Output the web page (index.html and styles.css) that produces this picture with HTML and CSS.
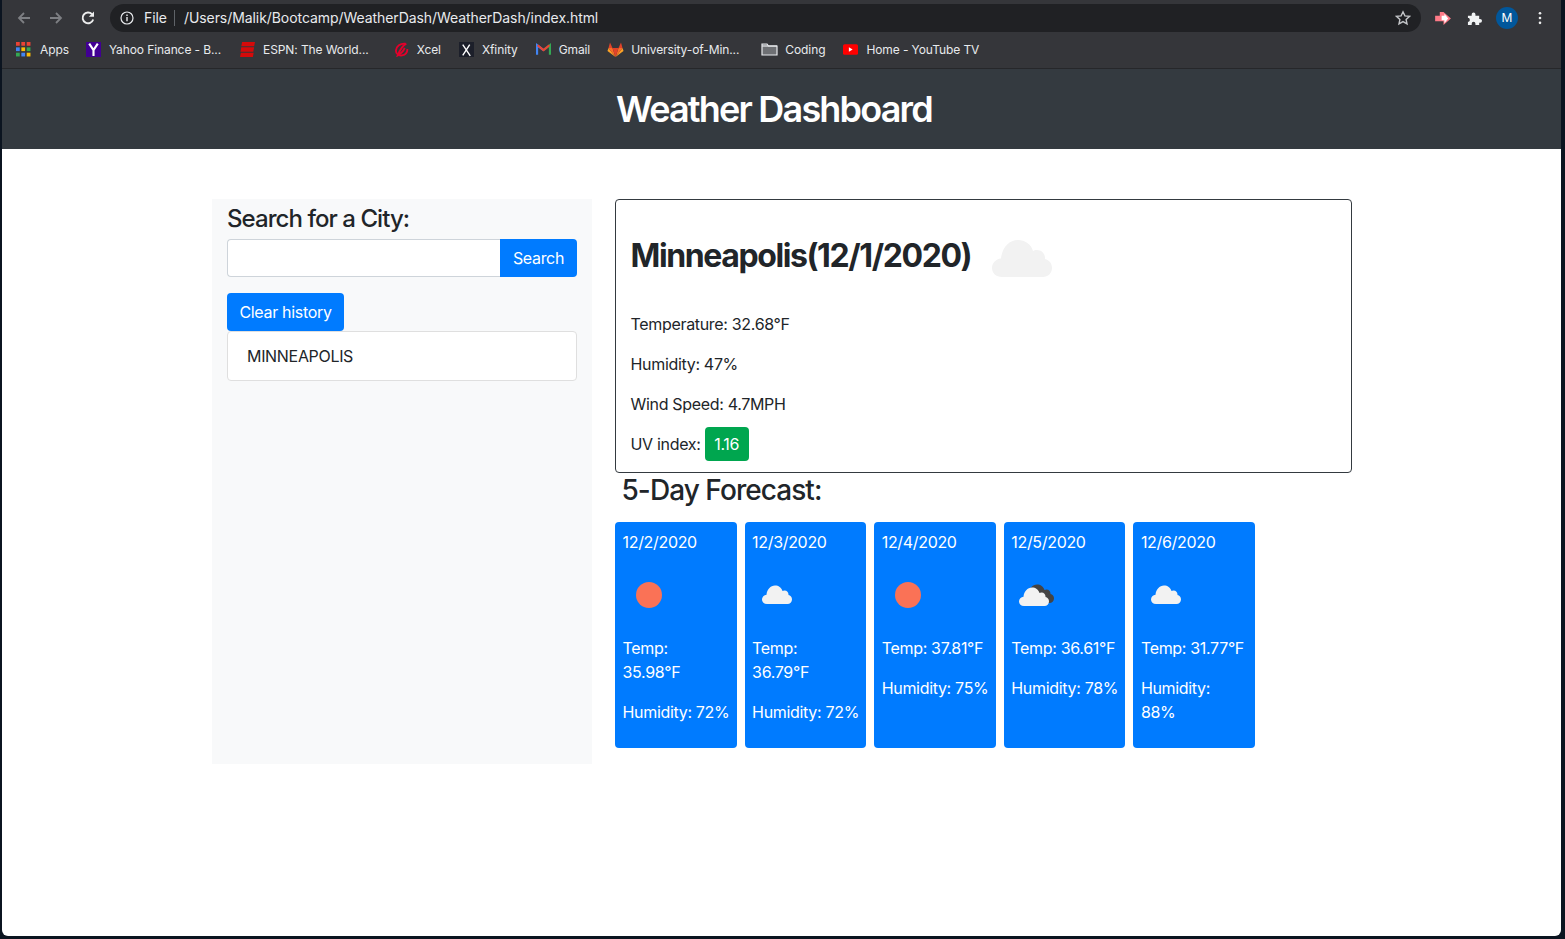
FILE: index.html

```html
<!DOCTYPE html>
<html>
<head>
  <title>Weather Dashboard</title>
  <link rel="stylesheet" href="styles.css">
</head>
<body>
  <div class="window">
    <!-- browser toolbar -->
    <div class="toolbar">
      <svg class="nav-icon" viewBox="0 0 16 16"><path d="M14 8H3M8 3L3 8l5 5" fill="none" stroke="#7d7f83" stroke-width="1.8"/></svg>
      <svg class="nav-icon" viewBox="0 0 16 16"><path d="M2 8h11M8 3l5 5-5 5" fill="none" stroke="#7d7f83" stroke-width="1.8"/></svg>
      <svg class="nav-icon" viewBox="0 0 16 16"><path d="M13.2 9.5A5.4 5.4 0 1 1 12 4.2" fill="none" stroke="#eceded" stroke-width="1.9"/><path d="M14 1.5v5.2H8.8z" fill="#eceded"/></svg>
      <div class="address">
        <svg class="info-icon" viewBox="0 0 14 14"><circle cx="7" cy="7" r="6" fill="none" stroke="#e8eaed" stroke-width="1.2"/><path d="M7 6v4.2M7 3.6v1.3" stroke="#e8eaed" stroke-width="1.4"/></svg>
        <span class="file-label">File</span>
        <span class="url">/Users/Malik/Bootcamp/WeatherDash/WeatherDash/index.html</span>
        <svg class="star-icon" viewBox="0 0 16 16"><path d="M8 1.8l1.9 4.1 4.5.5-3.3 3 .9 4.5L8 11.6l-4 2.3.9-4.5-3.3-3 4.5-.5z" fill="none" stroke="#c4c6c9" stroke-width="1.4"/></svg>
      </div>
      <div class="toolbar-right">
        <svg class="ext-icon" viewBox="0 0 18 14"><path d="M0 4h5V0h4l8 7-8 7H9v-4H0z" fill="#ff7b88"/><path d="M7 4h3V2l4 5-4 5V9H7z" fill="#fff"/></svg>
        <svg class="puzzle-icon" viewBox="0 0 16 16"><path d="M1 5h4V3.500a2 2 0 0 1 4 0V5h4v3.500h1a2 2 0 0 1 0 4h-1V15H9v-1.500a2 2 0 0 0-4 0V15H1v-3.500h1a2.500 2.500 0 0 0 0-4H1z" fill="#f1f3f4"/></svg>
        <span class="avatar">M</span>
        <svg class="menu-icon" viewBox="0 0 4 16"><circle cx="2" cy="2.500" r="1.500"/><circle cx="2" cy="8" r="1.500"/><circle cx="2" cy="13.500" r="1.500"/></svg>
      </div>
    </div>

    <!-- bookmarks -->
    <div class="bookmarks">
      <span class="mark mark-apps">
        <svg class="mark-icon" viewBox="0 0 14 14">
          <rect x="0" y="0" width="3.500" height="3.500" fill="#ea4335"/><rect x="5" y="0" width="3.500" height="3.500" fill="#ea4335"/><rect x="10" y="0" width="3.500" height="3.500" fill="#ea4335"/>
          <rect x="0" y="5" width="3.500" height="3.500" fill="#4285f4"/><rect x="5" y="5" width="3.500" height="3.500" fill="#fbbc05"/><rect x="10" y="5" width="3.500" height="3.500" fill="#34a853"/>
          <rect x="0" y="10" width="3.500" height="3.500" fill="#34a853"/><rect x="5" y="10" width="3.500" height="3.500" fill="#4285f4"/><rect x="10" y="10" width="3.500" height="3.500" fill="#fbbc05"/>
        </svg>Apps</span>
      <span class="mark mark-yahoo">
        <svg class="mark-icon" viewBox="0 0 14 14"><rect width="14" height="14" fill="#410093"/><path d="M3 1.500l4 6 4-6M7 7.500V13" fill="none" stroke="#fff" stroke-width="2"/></svg>Yahoo Finance - B...</span>
      <span class="mark mark-espn">
        <svg class="mark-icon" viewBox="0 0 14 14"><path d="M2 0h12l-.8 4H1.200zM1.200 5h12l-.8 4H.4zM.8 10h12l-.8 4H0z" fill="#d50a0a"/></svg>ESPN: The World...</span>
      <span class="mark mark-xcel">
        <svg class="mark-icon" viewBox="0 0 14 14"><path d="M10.500 1.500C6 1 2 4 1.800 8c-.1 3 2.500 5 5.700 4.500 3-.5 5-3 5-6" fill="none" stroke="#e4002b" stroke-width="1.700"/><path d="M11.500 1.500C8.500 3 6 6 3.500 12.500 7 10.500 9 8 10 5.500" fill="none" stroke="#e4002b" stroke-width="1.700"/></svg>Xcel</span>
      <span class="mark mark-xfinity">
        <svg class="mark-icon" viewBox="0 0 14 14"><rect width="14" height="14" fill="#1c1f2a"/><path d="M3.500 2.500l7 10.500M10 2.500l-6.500 10" fill="none" stroke="#fff" stroke-width="1.300"/></svg>Xfinity</span>
      <span class="mark mark-gmail">
        <svg class="mark-icon" viewBox="0 0 14 14"><path d="M1 12V3l6 4.500" fill="none" stroke="#4285f4" stroke-width="2"/><path d="M13 12V3L7 7.500" fill="none" stroke="#34a853" stroke-width="2"/><path d="M1.500 3L7 7.500 12.500 3" fill="none" stroke="#ea4335" stroke-width="2"/></svg>Gmail</span>
      <span class="mark mark-gitlab">
        <svg class="mark-icon gitlab-icon" viewBox="0 0 16 15"><path d="M8 15L0 9l1-3z" fill="#fca326"/><path d="M8 15l8-6-1-3z" fill="#fca326"/><path d="M8 15L1 6h4z" fill="#fc6d26"/><path d="M8 15l7-9h-4z" fill="#fc6d26"/><path d="M8 15L5 6h6z" fill="#e24329"/><path d="M1 6l1.500-5.500L5 6zM15 6L13.500.5 11 6z" fill="#e24329"/></svg>University-of-Min...</span>
      <span class="mark mark-coding">
        <svg class="mark-icon folder-icon" viewBox="0 0 17 14"><path d="M1 12.500V1.500h5l1.500 2h8.500v9z" fill="#6e7074" stroke="#e8eaed" stroke-width="1.200"/><path d="M1 3.500h15" stroke="#e8eaed" stroke-width="1.200"/></svg>Coding</span>
      <span class="mark">
        <svg class="mark-icon" viewBox="0 0 14 14"><rect y="2" width="14" height="10" rx="1.500" fill="#f00"/><path d="M5.500 5v4l3.500-2z" fill="#fff"/></svg>Home - YouTube TV</span>
    </div>

    <div class="navbar">
      <h1>Weather Dashboard</h1>
    </div>

    <div class="content">
      <aside class="sidebar">
        <h4>Search for a City:</h4>
        <div class="search-group">
          <input class="search-input" type="text">
          <button class="btn btn-search" type="button">Search</button>
        </div>
        <button class="btn btn-clear" type="button">Clear history</button>
        <ul class="history">
          <li>MINNEAPOLIS</li>
        </ul>
      </aside>

      <main class="results">
        <section class="current">
          <div class="current-title">
            <h2>Minneapolis(12/1/2020)</h2>
            <svg class="cloud-large" viewBox="0 0 60 38"><use href="#cloud" fill="#f2f2f2"/></svg>
          </div>
          <p>Temperature: 32.68°F</p>
          <p>Humidity: 47%</p>
          <p>Wind Speed: 4.7MPH</p>
          <p class="uv-row">UV index: <span class="uv-badge">1.16</span></p>
        </section>

        <h3 class="forecast-title">5-Day Forecast:</h3>
        <div class="forecast">
          <div class="day">
            <p>12/2/2020</p>
            <div class="day-icon"><span class="sun"></span></div>
            <p>Temp:<br>35.98°F</p>
            <p>Humidity: 72%</p>
          </div>
          <div class="day">
            <p>12/3/2020</p>
            <div class="day-icon"><svg class="cloud-small" viewBox="0 0 60 38"><use href="#cloud" fill="#f2f2f2"/></svg></div>
            <p>Temp:<br>36.79°F</p>
            <p>Humidity: 72%</p>
          </div>
          <div class="day">
            <p>12/4/2020</p>
            <div class="day-icon"><span class="sun"></span></div>
            <p>Temp: 37.81°F</p>
            <p>Humidity: 75%</p>
          </div>
          <div class="day">
            <p>12/5/2020</p>
            <div class="day-icon">
              <svg class="cloud-double" viewBox="0 0 70 44">
                <use href="#cloud" x="10" y="0" fill="#444"/>
                <use href="#cloud" x="0" y="6" fill="#f2f2f2"/>
              </svg>
            </div>
            <p>Temp: 36.61°F</p>
            <p>Humidity: 78%</p>
          </div>
          <div class="day">
            <p>12/6/2020</p>
            <div class="day-icon"><svg class="cloud-small" viewBox="0 0 60 38"><use href="#cloud" fill="#f2f2f2"/></svg></div>
            <p>Temp: 31.77°F</p>
            <p>Humidity:<br>88%</p>
          </div>
        </div>
      </main>
    </div>
  </div>

  <svg class="defs" width="0" height="0">
    <defs>
      <path id="cloud" d="M10 38C4 38 0 34 0 29c0-5 4-9 9-9.500C10 9 17 1 26 1c7 0 13 4 15 11 1-.5 2-1 4-1 5 0 8 4 8 8v1c4 1 7 4 7 9 0 5-4 9-9 9z"/>
    </defs>
  </svg>
</body>
</html>
```

FILE: styles.css

```css
* {
  box-sizing: border-box;
}

html, body {
  height: 100%;
}

body {
  margin: 0;
  background-color: #0b1420;
  font-family: Inter, "Liberation Sans", sans-serif;
  font-size: 16px;
  line-height: 24px;
  letter-spacing: -0.32px;
  color: #212529;
  overflow: hidden;
}

.defs {
  display: block;
}

.window {
  height: 936px;
  margin: 0 4px 0 2px;
  background-color: #fff;
  border-radius: 0 0 6px 6px;
  overflow: hidden;
}

/* browser toolbar */
.toolbar {
  height: 34px;
  display: flex;
  align-items: center;
  padding: 2px 0 0 14px;
  background-color: #35363a;
  letter-spacing: -0.07px;
}

.nav-icon {
  width: 16px;
  height: 16px;
  margin-right: 16px;
}

.address {
  width: 1311px;
  height: 28px;
  margin-left: -2px;
  padding: 0 10px;
  display: flex;
  align-items: center;
  background-color: #202124;
  border-radius: 14px;
  color: #e8eaed;
  font-size: 14px;
}

.info-icon {
  width: 14px;
  height: 14px;
  margin-right: 10px;
}

.file-label {
  padding-right: 7px;
  border-right: 1px solid #5f6368;
  line-height: 16px;
  margin-right: 9px;
}

.url {
  flex: 1;
}

.star-icon {
  width: 16px;
  height: 16px;
}

.toolbar-right {
  display: flex;
  align-items: center;
  margin-left: 14px;
}

.ext-icon {
  width: 17px;
  height: 13px;
  margin-right: 15px;
}

.puzzle-icon {
  width: 15px;
  height: 15px;
  margin-right: 14px;
}

.avatar {
  width: 22px;
  height: 22px;
  margin-right: 20px;
  border-radius: 50%;
  background-color: #01579b;
  color: #fff;
  font-size: 12px;
  line-height: 22px;
  text-align: center;
}

.menu-icon {
  width: 4px;
  height: 14px;
  fill: #eceded;
}

/* bookmarks */
.bookmarks {
  height: 35px;
  display: flex;
  align-items: center;
  padding: 0 0 3px 14px;
  background-color: #35363a;
  border-bottom: 1px solid #26272a;
  color: #e8eaed;
  font-size: 12px;
  letter-spacing: -0.1px;
}

.mark {
  display: flex;
  align-items: center;
}

.mark-icon {
  width: 15px;
  height: 15px;
  margin-right: 8px;
}

.mark-apps .mark-icon {
  margin-right: 9px;
}

.gitlab-icon {
  width: 17px;
  margin-right: 7px;
}

.folder-icon {
  width: 17px;
  margin-right: 7px;
}

.mark-apps { margin-right: 17px; }
.mark-yahoo { margin-right: 19px; }
.mark-espn { margin-right: 25px; }
.mark-xcel { margin-right: 18px; }
.mark-xfinity { margin-right: 18px; }
.mark-gmail { margin-right: 17px; }
.mark-gitlab { margin-right: 22px; }
.mark-coding { margin-right: 18px; }

/* page */
.navbar {
  height: 80px;
  padding-right: 15px;
  background-color: #343a40;
  display: flex;
  align-items: center;
  justify-content: center;
}

h1 {
  margin: 0;
  color: #fff;
  font-size: 36px;
  font-weight: 600;
  line-height: 43px;
  letter-spacing: -1.8px;
}

h4 {
  margin: 0 0 6px;
  font-size: 24px;
  font-weight: 500;
  line-height: 29px;
  letter-spacing: -0.94px;
}

.content {
  display: flex;
  align-items: flex-start;
  margin-top: 50px;
  padding-left: 210px;
  gap: 23px;
}

.sidebar {
  width: 380px;
  height: 565px;
  padding: 5px 15px;
  background-color: #f8f9fa;
}

.search-group {
  display: flex;
  height: 38px;
  margin-bottom: 16px;
}

.search-input {
  flex: 1;
  min-width: 0;
  border: 1px solid #ced4da;
  border-right: 0;
  border-radius: 4px 0 0 4px;
  background-color: #fff;
}

.btn {
  height: 38px;
  padding: 0 12px;
  border: 0;
  background-color: #007bff;
  color: #fff;
  font-family: inherit;
  font-size: 16px;
  letter-spacing: inherit;
}

.btn-search {
  width: 77px;
  border-radius: 0 4px 4px 0;
}

.btn-clear {
  display: block;
  width: 117px;
  border-radius: 4px;
}

.history {
  margin: 0;
  padding: 0;
  list-style: none;
  background-color: #fff;
  border: 1px solid #dfdfdf;
  border-radius: 4px;
}

.history li {
  height: 48px;
  padding: 12px 19px;
}

.results {
  width: 737px;
}

.current {
  height: 274px;
  padding: 15px 14.5px;
  border: 1px solid #343a40;
  border-radius: 4px;
}

.current p {
  margin: 0 0 16px;
}

.current-title {
  display: flex;
  align-items: center;
  height: 78px;
  margin-bottom: 19px;
  padding-top: 3px;
}

h2 {
  margin: 0;
  font-size: 32px;
  font-weight: 700;
  line-height: 38px;
  letter-spacing: -1.4px;
}

.cloud-large {
  width: 60px;
  height: 38px;
  margin-left: 20.5px;
  margin-top: 5px;
}

.current .uv-row {
  margin: -5px 0 0;
}

.uv-badge {
  display: inline-block;
  width: 44px;
  height: 34px;
  padding: 5px 0;
  background-color: #00a64f;
  border-radius: 4px;
  color: #fff;
  text-align: center;
}

.forecast-title {
  margin: 0 0 15px 6.5px;
  font-size: 28px;
  font-weight: 500;
  line-height: 34px;
  letter-spacing: -0.94px;
}

.forecast {
  display: flex;
  gap: 8px;
  width: 640px;
}

.day {
  flex: 1;
  min-width: 0;
  height: 226px;
  padding: 8px 7.5px;
  background-color: #007bff;
  border-radius: 4px;
  color: #fff;
}

.day p {
  margin: 0 0 16px;
  white-space: nowrap;
}

.day-icon {
  height: 50px;
  margin: 0 0 16px;
  display: flex;
  align-items: center;
}

.sun {
  width: 26px;
  height: 26px;
  margin-left: 13px;
  border-radius: 50%;
  background-color: #fa7256;
}

.cloud-small {
  width: 30px;
  height: 19px;
  margin-left: 10px;
  margin-top: -2px;
}

.cloud-double {
  width: 35px;
  height: 22px;
  margin-left: 8px;
  margin-top: -1px;
}
```
